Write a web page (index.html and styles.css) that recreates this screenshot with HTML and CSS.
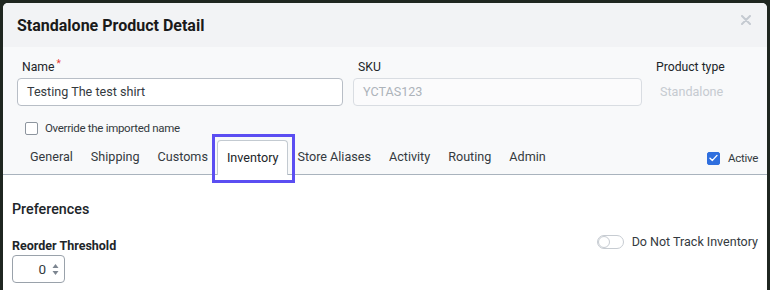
FILE: index.html
```html
<!DOCTYPE html>
<html lang="en">
<head>
<meta charset="utf-8">
<title>Standalone Product Detail</title>
<link rel="stylesheet" href="styles.css">
</head>
<body>
<div class="backdrop">
  <div class="modal">
    <div class="modal-header">
      <h1 class="modal-title">Standalone Product Detail</h1>
      <button class="close" aria-label="Close">
        <svg width="10" height="10" viewBox="0 0 10 10"><path d="M1 1L9 9M9 1L1 9" stroke="#c5cad1" stroke-width="2" stroke-linecap="round"/></svg>
      </button>
    </div>
    <div class="modal-top">
      <div class="field-row">
        <div class="field">
          <label class="field-label">Name<span class="req">*</span></label>
          <div class="text-input">Testing The test shirt</div>
        </div>
        <div class="field">
          <label class="field-label">SKU</label>
          <div class="text-input disabled">YCTAS123</div>
        </div>
        <div class="field type-field">
          <label class="field-label">Product type</label>
          <div class="type-value">Standalone</div>
        </div>
      </div>
      <label class="check-row">
        <span class="checkbox"></span>
        <span class="check-text">Override the imported name</span>
      </label>
      <div class="tabs">
        <div class="tab">General</div>
        <div class="tab">Shipping</div>
        <div class="tab">Customs</div>
        <div class="tab active">Inventory</div>
        <div class="tab">Store Aliases</div>
        <div class="tab">Activity</div>
        <div class="tab">Routing</div>
        <div class="tab">Admin</div>
        <label class="active-check">
          <span class="checkbox checked">
            <svg width="9" height="8" viewBox="0 0 9 8"><path d="M1 4.2L3.4 6.4L8 1.4" fill="none" stroke="#fff" stroke-width="1.4" stroke-linecap="round" stroke-linejoin="round"/></svg>
          </span>
          <span class="active-text">Active</span>
        </label>
      </div>
    </div>
    <div class="modal-body">
      <h2 class="section-title">Preferences</h2>
      <div class="pref-row">
        <div class="pref-field">
          <div class="pref-label">Reorder Threshold</div>
          <div class="num-input">
            <span class="num-value">0</span>
            <svg class="spin" width="7" height="13" viewBox="0 0 7 13"><path d="M3.5 1L6.5 5H0.5Z" fill="#7c8590"/><path d="M3.5 12L6.5 8H0.5Z" fill="#7c8590"/></svg>
          </div>
        </div>
        <label class="toggle-row">
          <span class="toggle"><span class="knob"></span></span>
          <span class="toggle-text">Do Not Track Inventory</span>
        </label>
      </div>
    </div>
  </div>
</div>
</body>
</html>
```
FILE: styles.css
```css
* { box-sizing: border-box; }
html, body { margin: 0; padding: 0; }
body {
  width: 770px;
  height: 290px;
  overflow: hidden;
  background: #1f2620;
  font-family: Roboto, "Liberation Sans", sans-serif;
  color: #212529;
}
.backdrop {
  padding: 3px 3px 0 3px;
  height: 290px;
}
.modal {
  height: 287px;
  background: #f8f9fa;
  border-top-left-radius: 5px;
  border-top-right-radius: 5px;
  overflow: hidden;
  display: flex;
  flex-direction: column;
}
.modal-header {
  height: 44px;
  background: #f2f3f5;
  display: flex;
  align-items: center;
  justify-content: space-between;
  padding: 0 16px 0 14px;
  flex-shrink: 0;
}
.modal-title {
  margin: 0;
  font-size: 16px;
  font-weight: 700;
  color: #1a1a1a;
}
.close {
  border: 0;
  background: none;
  padding: 0;
  align-self: flex-start;
  margin-top: 12px;
  width: 10px;
  height: 10px;
  display: flex;
}
.modal-top {
  background: #f8f9fa;
  padding: 10px 0 0 0;
  flex-shrink: 0;
}
.field-row {
  display: grid;
  grid-template-columns: 326px 289px 1fr;
  column-gap: 10px;
  padding-left: 14px;
}
.field-label {
  display: block;
  font-size: 12.2px;
  line-height: 20px;
  height: 21px;
  padding-left: 5px;
  color: #212529;
}
.type-field .field-label { padding-left: 4px; }
.req {
  color: #e53935;
  font-size: 10px;
  vertical-align: top;
  margin-left: 2px;
  line-height: 13px;
}
.text-input {
  height: 28px;
  border: 1px solid #b8bec6;
  border-radius: 4px;
  background: #fff;
  font-size: 12.6px;
  line-height: 26px;
  padding: 0 9px;
  color: #343a40;
}
.text-input.disabled {
  border-color: #d9dde2;
  color: #adb3ba;
  background: #fbfbfc;
}
.type-value {
  font-size: 12.6px;
  line-height: 28px;
  padding-left: 8px;
  color: #c6cbd1;
}
.check-row {
  display: flex;
  align-items: center;
  gap: 7px;
  margin-top: 15px;
  padding-left: 22px;
  height: 14px;
}
.checkbox {
  width: 13px;
  height: 13px;
  border: 1px solid #8d959e;
  border-radius: 2px;
  background: #fff;
  display: flex;
  align-items: center;
  justify-content: center;
  flex-shrink: 0;
}
.checkbox.checked {
  background: #2f6fde;
  border-color: #2f6fde;
}
.check-text {
  font-size: 11.5px;
  letter-spacing: -0.3px;
  color: #343a40;
}
.tabs {
  margin-top: 5px;
  display: flex;
  align-items: flex-end;
  height: 35px;
  border-bottom: 1px solid #a9b3bd;
  padding: 0 9px 0 18px;
}
.tab {
  position: relative;
  height: 34px;
  padding: 0 8px;
  border: 1px solid transparent;
  border-bottom: 0;
  font-size: 12.6px;
  line-height: 32px;
  color: #343a40;
  white-space: nowrap;
}
.tab.active {
  background: #fff;
  border-color: #c3cad1;
  border-top-left-radius: 4px;
  border-top-right-radius: 4px;
  height: 35px;
  padding: 0 9px;
  margin-bottom: -1px;
  line-height: 34px;
  color: #212529;
}
.tab.active::after {
  content: "";
  position: absolute;
  left: -6px;
  right: -8px;
  top: -7px;
  bottom: -8px;
  border: 3px solid #5b4ef2;
}
.active-check {
  margin-left: auto;
  display: flex;
  align-items: center;
  gap: 8px;
  height: 32px;
}
.active-text {
  font-size: 11.5px;
  letter-spacing: -0.3px;
  color: #343a40;
}
.modal-body {
  background: #fff;
  flex: 1;
  padding: 24px 9px 0 9px;
}
.section-title {
  margin: 0;
  font-size: 14.3px;
  font-weight: 500;
  line-height: 20px;
  color: #212529;
}
.pref-row {
  display: flex;
  justify-content: space-between;
  align-items: flex-start;
  margin-top: 19px;
}
.pref-label {
  font-size: 12.5px;
  font-weight: 700;
  line-height: 16px;
  color: #212529;
}
.num-input {
  margin-top: 1px;
  width: 53px;
  height: 28px;
  border: 1px solid #9aa2ab;
  border-radius: 4px;
  display: flex;
  align-items: center;
  justify-content: flex-end;
  padding-right: 5px;
  gap: 6px;
}
.num-value {
  font-size: 13.5px;
  color: #343a40;
}
.toggle-row {
  display: flex;
  align-items: center;
  gap: 8px;
  margin-top: -4px;
}
.toggle {
  width: 27px;
  height: 14px;
  border: 1px solid #c7ccd2;
  border-radius: 7px;
  background: #fff;
  position: relative;
  display: flex;
  align-items: center;
}
.knob {
  width: 12px;
  height: 12px;
  border-radius: 50%;
  border: 1px solid #c7ccd2;
  background: #fff;
}
.toggle-text {
  font-size: 12.5px;
  color: #343a40;
}
```
